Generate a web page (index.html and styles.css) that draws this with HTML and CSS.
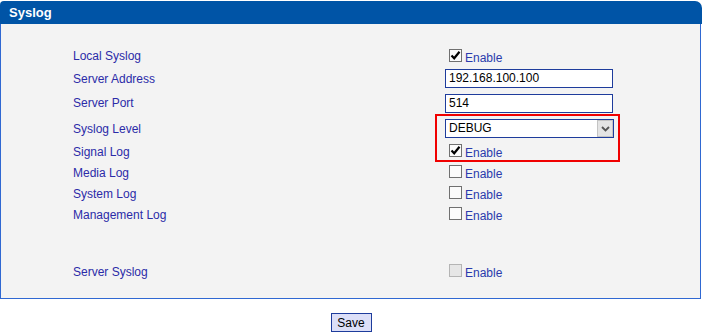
FILE: index.html
```html
<!DOCTYPE html>
<html>
<head>
<meta charset="utf-8">
<link rel="stylesheet" href="styles.css">
</head>
<body>
<div class="panel">
  <div class="panel-head">Syslog</div>
  <div class="panel-body">
    <div class="highlight"></div>
    <div class="row r1">
      <div class="label">Local Syslog</div>
      <div class="ctrl"><span class="cb checked"><svg viewBox="0 0 11 11" width="11" height="11"><path d="M1.5 5.5 L4.2 8.3 L9.5 1.8" fill="none" stroke="#000" stroke-width="2.2"/></svg></span><span class="cb-text">Enable</span></div>
    </div>
    <div class="row r2">
      <div class="label">Server Address</div>
      <div class="ctrl"><div class="input">192.168.100.100</div></div>
    </div>
    <div class="row r3">
      <div class="label">Server Port</div>
      <div class="ctrl"><div class="input">514</div></div>
    </div>
    <div class="row r4">
      <div class="label">Syslog Level</div>
      <div class="ctrl"><div class="select"><span class="select-val">DEBUG</span><span class="select-btn"><svg viewBox="0 0 9 6" width="9" height="6"><path d="M1 1 L4.5 4.5 L8 1" fill="none" stroke="#555" stroke-width="1.8"/></svg></span></div></div>
    </div>
    <div class="row r5">
      <div class="label">Signal Log</div>
      <div class="ctrl"><span class="cb checked"><svg viewBox="0 0 11 11" width="11" height="11"><path d="M1.5 5.5 L4.2 8.3 L9.5 1.8" fill="none" stroke="#000" stroke-width="2.2"/></svg></span><span class="cb-text">Enable</span></div>
    </div>
    <div class="row">
      <div class="label">Media Log</div>
      <div class="ctrl"><span class="cb"></span><span class="cb-text">Enable</span></div>
    </div>
    <div class="row">
      <div class="label">System Log</div>
      <div class="ctrl"><span class="cb"></span><span class="cb-text">Enable</span></div>
    </div>
    <div class="row">
      <div class="label">Management Log</div>
      <div class="ctrl"><span class="cb"></span><span class="cb-text">Enable</span></div>
    </div>
    <div class="row r9">
      <div class="label">Server Syslog</div>
      <div class="ctrl"><span class="cb disabled"></span><span class="cb-text">Enable</span></div>
    </div>
  </div>
</div>
<div class="actions"><button class="btn">Save</button></div>
</body>
</html>
```
FILE: styles.css
```css
html, body {
  margin: 0;
  padding: 0;
  background: #ffffff;
  font-family: "Liberation Sans", Arial, sans-serif;
  font-size: 12px;
}

.panel {
  width: 702px;
  margin-top: 1px;
}

.panel-head {
  height: 23px;
  line-height: 23px;
  background: #0054a6;
  color: #ffffff;
  font-weight: bold;
  font-size: 13px;
  padding-left: 9px;
  border-radius: 4px 7px 0 0;
}

.panel-body {
  position: relative;
  width: 701px;
  box-sizing: border-box;
  border: 1px solid #2f68d2;
  border-top: none;
  background: #f3f3f3;
  padding: 21px 0 16px 72px;
}

.highlight {
  position: absolute;
  left: 434px;
  top: 90px;
  width: 185px;
  height: 48px;
  box-sizing: border-box;
  border: 2px solid #f00000;
}

.row {
  display: flex;
  align-items: center;
  height: 21px;
}

.r1 { height: 22px; }
.r2 { height: 23px; }
.r3 { height: 26px; }
.r4 { height: 25px; }
.r9 { margin-top: 36px; }

.label {
  width: 372px;
  color: #2b2ba8;
}

.ctrl {
  display: flex;
  align-items: center;
}

.cb {
  width: 13px;
  height: 13px;
  box-sizing: border-box;
  border: 1px solid #707070;
  background: #fbfbfb;
  margin-left: 4px;
  margin-bottom: 2px;
  display: flex;
  align-items: center;
  justify-content: center;
}

.cb svg { display: block; }

.cb.disabled {
  background: #e6e6e6;
  border-color: #b4b4b4;
}

.cb-text {
  color: #2a3aac;
  margin-left: 3px;
  margin-top: 3px;
}

.input {
  width: 168px;
  height: 19px;
  box-sizing: border-box;
  border: 1px solid #1e3c9c;
  background: #ffffff;
  color: #000000;
  padding-left: 3px;
  line-height: 17px;
}

.select {
  width: 169px;
  height: 19px;
  box-sizing: border-box;
  border: 1px solid #1e3c9c;
  background: #ffffff;
  color: #000000;
  display: flex;
  align-items: stretch;
}

.select-val {
  flex: 1;
  padding-left: 3px;
  line-height: 17px;
}

.select-btn {
  width: 16px;
  box-sizing: border-box;
  border: 1px solid #c4c4c4;
  background: #e4e4e4;
  display: flex;
  align-items: center;
  justify-content: center;
}

.actions {
  display: flex;
  justify-content: center;
  margin-top: 14px;
}

.btn {
  width: 41px;
  height: 19px;
  box-sizing: border-box;
  border: 1px solid #1e3c9c;
  background: #dcdff8;
  color: #000000;
  font-family: "Liberation Sans", Arial, sans-serif;
  font-size: 12px;
  padding: 0;
  border-radius: 0;
}
```
